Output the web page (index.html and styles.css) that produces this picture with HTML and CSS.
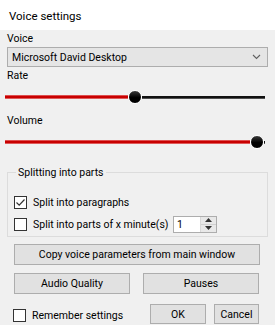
FILE: index.html
```html
<!DOCTYPE html>
<html lang="en">
<head>
    <meta charset="UTF-8">
    <title>Voice settings</title>
    <link rel="stylesheet" href="styles.css">
</head>
<body>
    <div class="window">
        <header class="title-bar">Voice settings</header>

        <main class="content">
            <div class="label">Voice</div>
            <div class="combo">
                <span>Microsoft David Desktop</span>
                <svg class="chevron" width="9" height="6" viewBox="0 0 9 6">
                    <path d="M1 1 L4.5 4.5 L8 1" fill="none" stroke="#606060" stroke-width="1.1"/>
                </svg>
            </div>

            <div class="label">Rate</div>
            <div class="slider">
                <div class="track-fill" style="width: 123px"></div>
                <div class="knob"></div>
                <div class="track-rest"></div>
            </div>

            <div class="label volume-label">Volume</div>
            <div class="slider">
                <div class="track-fill" style="width: 245px"></div>
                <div class="knob"></div>
                <div class="track-rest"></div>
            </div>

            <div class="group">
                <div class="group-title">Splitting into parts</div>
                <div class="check-row first">
                    <span class="checkbox">
                        <svg width="11" height="11" viewBox="0 0 11 11">
                            <path d="M1.5 5.5 L4.2 8.2 L9.5 2.5" fill="none" stroke="#333" stroke-width="1.2"/>
                        </svg>
                    </span>
                    <span>Split into paragraphs</span>
                </div>
                <div class="check-row">
                    <span class="checkbox"></span>
                    <span class="minutes-text">Split into parts of x minute(s)</span>
                    <div class="spin">
                        <span class="spin-value">1</span>
                        <div class="spin-buttons">
                            <div class="spin-btn">
                                <svg width="7" height="4" viewBox="0 0 7 4"><path d="M0 4 L3.5 0 L7 4 Z" fill="#333"/></svg>
                            </div>
                            <div class="spin-btn">
                                <svg width="7" height="4" viewBox="0 0 7 4"><path d="M0 0 L3.5 4 L7 0 Z" fill="#333"/></svg>
                            </div>
                        </div>
                    </div>
                </div>
            </div>

            <button class="btn copy-btn">Copy voice parameters from main window</button>

            <div class="btn-row">
                <button class="btn wide">Audio Quality</button>
                <button class="btn wide">Pauses</button>
            </div>

            <div class="bottom-row">
                <div class="check-row remember">
                    <span class="checkbox"></span>
                    <span>Remember settings</span>
                </div>
                <div class="dialog-buttons">
                    <button class="btn ok-btn">OK</button>
                    <button class="btn cancel-btn">Cancel</button>
                </div>
            </div>
        </main>
    </div>
</body>
</html>
```

FILE: styles.css
```css
body {
    margin: 0;
    padding: 0;
    font-family: Roboto, "Liberation Sans", sans-serif;
    font-size: 10.5px;
    color: #000;
    background-color: #f0f0f0;
}

.window {
    width: 275px;
    height: 325px;
    overflow: hidden;
    background-color: #f0f0f0;
}

.title-bar {
    height: 30px;
    line-height: 32px;
    padding-left: 9px;
    background-color: #fff;
    font-size: 11.5px;
}

.content {
    padding: 0 7px;
}

.label {
    height: 16px;
    line-height: 16px;
    margin-top: 1px;
}

.combo {
    height: 18px;
    border: 1px solid #adadad;
    background-color: #e5e5e5;
    display: flex;
    align-items: center;
    justify-content: space-between;
    padding: 0 6px 0 4px;
}

.chevron {
    display: block;
}

.slider {
    display: flex;
    align-items: center;
    height: 14px;
    margin: 6px 3px 0 -2px;
}

.track-fill {
    height: 4px;
    background: linear-gradient(#e88, #c80000 30%, #c80000 70%, #e99);
}

.track-rest {
    flex: 1;
    height: 3px;
    background: linear-gradient(#111 65%, #888);
}

.knob {
    width: 12px;
    height: 12px;
    border-radius: 50%;
    background: linear-gradient(#3a3a3a, #000 55%);
    border: 1px solid #fff;
    flex-shrink: 0;
}

.volume-label {
    margin-top: 9px;
}

.group {
    margin-top: 23px;
    height: 63px;
    padding: 0 0 0 6px;
    border: 1px solid #dcdcdc;
}

.group-title {
    width: fit-content;
    height: 16px;
    line-height: 16px;
    margin: -8px 0 0 2px;
    padding: 0 2px;
    background-color: #f0f0f0;
}

.check-row {
    display: flex;
    align-items: center;
    gap: 6px;
    height: 16px;
    white-space: nowrap;
}

.group .first {
    margin-top: 13px;
}

.check-row + .check-row {
    margin-top: 6px;
}

.checkbox {
    width: 11px;
    height: 11px;
    border: 1px solid #333;
    background-color: #fff;
    display: flex;
    align-items: center;
    justify-content: center;
    flex-shrink: 0;
}

.minutes-text {
    width: 134px;
}

.spin {
    width: 42px;
    height: 15px;
    border: 1px solid #adadad;
    background-color: #fff;
    display: flex;
    justify-content: space-between;
    flex-shrink: 0;
}

.spin-value {
    padding-left: 3px;
    line-height: 15px;
}

.spin-buttons {
    width: 15px;
    display: flex;
    flex-direction: column;
    border-left: 1px solid #d8d8d8;
}

.spin-btn {
    flex: 1;
    background-color: #e8e8e8;
    display: flex;
    align-items: center;
    justify-content: center;
}

.spin-btn + .spin-btn {
    border-top: 1px solid #d0d0d0;
}

.spin-btn svg {
    display: block;
}

.btn {
    font-family: inherit;
    font-size: 10.5px;
    color: #000;
    background-color: #e1e1e1;
    border: 1px solid #adadad;
    border-radius: 0;
    padding: 0;
    height: 21px;
    margin: 0;
}

.copy-btn {
    display: block;
    width: 246px;
    margin: 7px 0 0 7px;
}

.btn-row {
    display: flex;
    gap: 13px;
    margin: 8px 0 0 7px;
}

.btn.wide {
    width: 116px;
}

.bottom-row {
    display: flex;
    justify-content: space-between;
    align-items: flex-start;
    margin-top: 10px;
    padding-left: 6px;
}

.remember {
    margin-top: 3px;
}

.dialog-buttons {
    display: flex;
    gap: 8px;
    margin-right: 9px;
}

.ok-btn {
    width: 56px;
    height: 20px;
}

.cancel-btn {
    width: 45px;
    height: 20px;
}
```
